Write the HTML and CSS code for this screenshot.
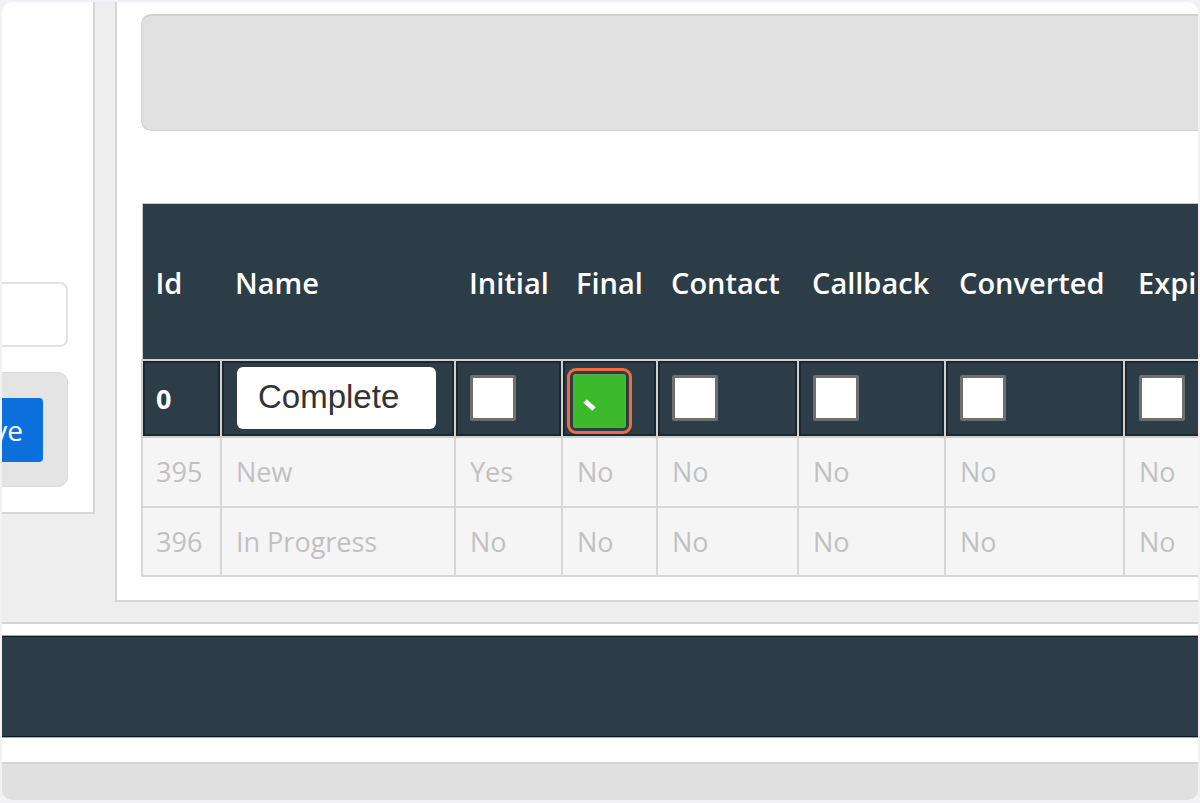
FILE: index.html
```html
<!DOCTYPE html>
<html lang="en">
<head>
<meta charset="utf-8">
<title>Statuses</title>
<link rel="stylesheet" href="styles.css">
</head>
<body>
<div class="frame">
  <div class="top">
    <aside class="left">
      <div class="field"></div>
      <div class="actions">
        <button class="btn" type="button">Save</button>
      </div>
    </aside>
    <main class="main">
      <div class="toolbar"></div>
      <table class="grid">
        <colgroup>
          <col class="c-id">
          <col class="c-name">
          <col class="c-initial">
          <col class="c-final">
          <col class="c-contact">
          <col class="c-callback">
          <col class="c-converted">
          <col class="c-expired">
        </colgroup>
        <thead>
          <tr class="head">
            <th>Id</th>
            <th>Name</th>
            <th>Initial</th>
            <th>Final</th>
            <th>Contact</th>
            <th>Callback</th>
            <th>Converted</th>
            <th>Expired</th>
          </tr>
        </thead>
        <tbody>
          <tr class="edit">
            <td class="bold">0</td>
            <td><span class="txt">Complete</span></td>
            <td><span class="chk"></span></td>
            <td>
              <span class="ring"><span class="chk on"><svg width="52" height="52" viewBox="0 0 52 52"><line x1="12" y1="27" x2="21" y2="35" stroke="#fff" stroke-width="5"/></svg></span></span>
            </td>
            <td><span class="chk"></span></td>
            <td><span class="chk"></span></td>
            <td><span class="chk"></span></td>
            <td><span class="chk"></span></td>
          </tr>
          <tr class="row r1">
            <td>395</td>
            <td>New</td>
            <td>Yes</td>
            <td>No</td>
            <td>No</td>
            <td>No</td>
            <td>No</td>
            <td>No</td>
          </tr>
          <tr class="row r2">
            <td>396</td>
            <td>In Progress</td>
            <td>No</td>
            <td>No</td>
            <td>No</td>
            <td>No</td>
            <td>No</td>
            <td>No</td>
          </tr>
        </tbody>
      </table>
    </main>
  </div>
  <div class="bar"></div>
  <div class="foot"></div>
</div>
</body>
</html>
```

FILE: styles.css
```css
* { box-sizing: border-box; }

html, body {
  margin: 0;
  padding: 0;
}

body {
  background: #f1f1f6;
  padding: 2px 2px 3px 2px;
  font-family: "Open Sans", "Noto Sans", sans-serif;
}

.frame {
  width: 1196px;
  height: 798px;
  border-radius: 10px;
  overflow: hidden;
  background: #fff;
  display: flex;
  flex-direction: column;
}

.top {
  display: flex;
  align-items: flex-start;
  gap: 20px;
  height: 622px;
  background: #eeeeee;
  border-bottom: 2px solid #d5d5d5;
  flex: none;
}

.left {
  width: 93px;
  height: 512px;
  background: #fff;
  border-right: 2px solid #d6d6d6;
  border-bottom: 2px solid #d6d6d6;
  overflow: hidden;
  flex: none;
  padding-top: 280px;
}

.field {
  width: 110px;
  height: 65px;
  margin-left: -44px;
  border: 2px solid #e2e2e2;
  border-radius: 8px;
  background: #fff;
}

.actions {
  width: 110px;
  height: 115px;
  margin: 25px 0 0 -44px;
  background: #e4e4e4;
  border: 1px solid #dadada;
  border-radius: 10px;
  display: flex;
  justify-content: flex-end;
  align-items: flex-start;
  padding: 25px 24px 0 0;
}

.btn {
  height: 64px;
  border: none;
  border-radius: 4px;
  background: #0b6fdc;
  color: #fff;
  font-family: "Open Sans", sans-serif;
  font-size: 28px;
  padding: 0 20px 0 18px;
  line-height: 64px;
}

.main {
  flex: 1;
  height: 600px;
  min-width: 0;
  background: #fff;
  border-left: 2px solid #d6d6d6;
  border-bottom: 2px solid #d6d6d6;
  padding: 12px 0 0 24px;
  overflow: hidden;
}

.toolbar {
  width: 1100px;
  height: 117px;
  background: #e1e1e1;
  border: 1px solid #d0d0d0;
  border-top-width: 2px;
  border-radius: 10px;
}

.grid {
  margin: 72px 0 0 0;
  border-collapse: collapse;
  table-layout: fixed;
  width: 1112px;
}

.c-id { width: 79px; }
.c-name { width: 234px; }
.c-initial { width: 107px; }
.c-final { width: 95px; }
.c-contact { width: 141px; }
.c-callback { width: 147px; }
.c-converted { width: 179px; }
.c-expired { width: 130px; }

.head {
  height: 156px;
  background: #2c3d48;
}

.head th {
  text-align: left;
  color: #fff;
  font-weight: 600;
  font-size: 29px;
  padding: 3px 0 0 14px;
  white-space: nowrap;
  overflow: hidden;
  border-top: 1px solid #c9c9c9;
  border-bottom: 1px solid #1a2830;
  vertical-align: middle;
}

.head th:first-child {
  border-left: 1px solid #c9c9c9;
  padding-left: 13px;
}

.edit { height: 77px; }

.edit td {
  background: #2c3d48;
  border: 2px solid #cfcfcf;
  box-shadow: inset 0 0 0 2px #1b2830;
  padding: 0 0 0 14px;
  vertical-align: middle;
  color: #fff;
  font-size: 27px;
}

.edit td.bold {
  font-weight: 700;
  padding-left: 13px;
}

.txt {
  display: block;
  width: 199px;
  height: 62px;
  margin-left: 1px;
  background: #fff;
  border-radius: 6px;
  font-family: "Liberation Sans", Arial, sans-serif;
  font-size: 33px;
  color: #333;
  line-height: 60px;
  padding-left: 21px;
}

.chk {
  display: block;
  width: 46px;
  height: 46px;
  background: #fff;
  border: 3px solid #6f6f6f;
  border-radius: 2px;
}

.ring {
  display: block;
  width: 65px;
  height: 66px;
  margin: 5px 0 0 -10px;
  border: 3px solid #f26d3d;
  border-radius: 9px;
  padding: 3px;
}

.chk.on {
  width: 53px;
  height: 54px;
  background: #3cba2b;
  border: 1px solid #6a9d60;
  position: relative;
}

.chk.on svg {
  display: block;
  position: absolute;
  left: -1px;
  top: -1px;
}

.row td {
  background: #f5f5f5;
  border: 2px solid #d7d7d7;
  color: #c1c1c1;
  font-size: 27px;
  padding: 0 0 0 14px;
  vertical-align: middle;
  white-space: nowrap;
}

.row td:first-child { padding-left: 13px; }

.r1 { height: 70px; }
.r2 { height: 69px; }

.bar {
  flex: none;
  height: 101px;
  margin-top: 12px;
  margin-bottom: 25px;
  background: #2c3d48;
  border-top: 1px solid #0c1a21;
  border-bottom: 1px solid #0c1a21;
  box-shadow: 0 -1px 0 #a9a9a9, 0 1px 0 #a9a9a9;
}

.foot {
  flex: 1;
  background: #e0e0e0;
  border-top: 2px solid #d3d3d3;
}
```
